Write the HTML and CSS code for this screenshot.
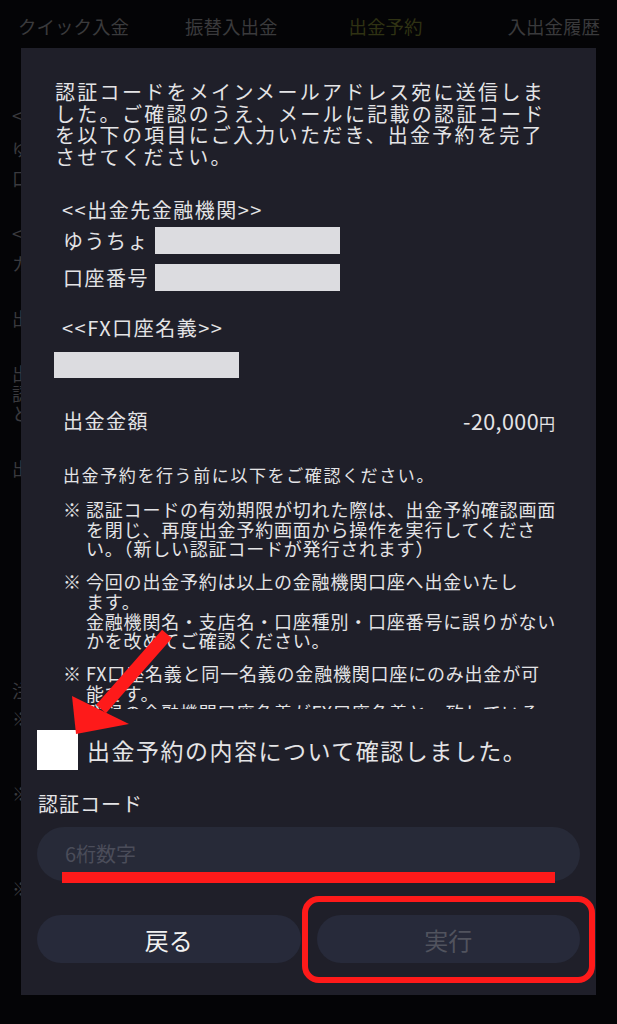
FILE: index.html
```html
<!DOCTYPE html>
<html lang="ja">
<head>
    <meta charset="UTF-8">
    <meta name="viewport" content="width=device-width, initial-scale=1.0">
    <title>出金予約</title>
    <link rel="stylesheet" href="styles.css">
</head>
<body>

<div class="tabs">
    <div class="tab">クイック入金</div>
    <div class="tab">振替入出金</div>
    <div class="tab active">出金予約</div>
    <div class="tab">入出金履歴</div>
</div>

<div class="page">
    <div class="bg-line gap-a">&lt;</div>
    <div class="bg-line gap-b">ゆ</div>
    <div class="bg-line gap-c">口</div>
    <div class="bg-line gap-d">&lt;</div>
    <div class="bg-line gap-c">カ</div>
    <div class="bg-line gap-e">出</div>
    <div class="bg-line gap-d">出</div>
    <div class="bg-line tight">認</div>
    <div class="bg-line tight">と</div>
    <div class="bg-line gap-e">出</div>
    <div class="bg-line gap-f">注</div>
    <div class="bg-line gap-g">※</div>
    <div class="bg-line gap-h">※</div>
    <div class="bg-line gap-i">※</div>
</div>

<div class="modal">
    <div class="scroll">
        <p class="lead">認証コードをメインメールアドレス宛に送信しま<br>した。ご確認のうえ、メールに記載の認証コード<br>を以下の項目にご入力いただき、出金予約を完了<br>させてください。</p>

        <div class="heading bank-heading">&lt;&lt;出金先金融機関&gt;&gt;</div>
        <div class="field first">
            <span class="field-label">ゆうちょ</span>
            <span class="mask"></span>
        </div>
        <div class="field">
            <span class="field-label">口座番号</span>
            <span class="mask"></span>
        </div>

        <div class="heading fx-heading">&lt;&lt;FX口座名義&gt;&gt;</div>
        <div class="mask name-mask"></div>

        <div class="amount">
            <span>出金金額</span>
            <span class="amount-value">-20,000<small>円</small></span>
        </div>

        <p class="intro">出金予約を行う前に以下をご確認ください。</p>

        <div class="note">
            <span class="mark">※</span>
            <span>認証コードの有効期限が切れた際は、出金予約確認画面<br>を閉じ、再度出金予約画面から操作を実行してくださ<br>い。（新しい認証コードが発行されます）</span>
        </div>
        <div class="note">
            <span class="mark">※</span>
            <span>今回の出金予約は以上の金融機関口座へ出金いたし<br>ます。<br>金融機関名・支店名・口座種別・口座番号に誤りがない<br>かを改めてご確認ください。</span>
        </div>
        <div class="note">
            <span class="mark">※</span>
            <span>FX口座名義と同一名義の金融機関口座にのみ出金が可<br>能です。<br>登録の金融機関口座名義がFX口座名義と一致している</span>
        </div>
    </div>

    <label class="confirm">
        <span class="checkbox"></span>
        出金予約の内容について確認しました。
    </label>

    <div class="code-label">認証コード</div>
    <div class="code-input">6桁数字</div>

    <div class="actions">
        <button class="btn">戻る</button>
        <button class="btn disabled">実行</button>
    </div>
</div>

<svg class="marks" width="617" height="1024" viewBox="0 0 617 1024">
    <rect x="62" y="872" width="493" height="11" fill="#fe1a1a"/>
    <rect x="305" y="899" width="287" height="81" rx="14" fill="none" stroke="#fe1a1a" stroke-width="6"/>
    <line x1="167" y1="634" x2="101" y2="709" stroke="#fe1a1a" stroke-width="13"/>
    <polygon points="72,696 129,724 76,734" fill="#fe1a1a"/>
</svg>

</body>
</html>
```

FILE: styles.css
```css
body {
    margin: 0;
    width: 617px;
    height: 1024px;
    overflow: hidden;
    background-color: #040406;
    font-family: "Noto Sans CJK JP", "Noto Sans", sans-serif;
    position: relative;
}
.tabs {
    display: grid;
    grid-template-columns: 1fr 1fr 1fr 1fr;
    justify-items: center;
    height: 52px;
    line-height: 52px;
    font-size: 18.5px;
    color: #3a3a3c;
}
.tab:first-child {
    justify-self: start;
    padding-left: 18px;
}
.tab:last-child {
    justify-self: end;
    padding-right: 17px;
}
.tab.active {
    color: #2f3213;
}
.page {
    padding-left: 12px;
    color: #3a3a3e;
    font-size: 18px;
    line-height: 20px;
}
.gap-a { margin-top: 53px; }
.gap-b { margin-top: 13px; }
.gap-c { margin-top: 10px; }
.gap-d { margin-top: 35px; }
.gap-e { margin-top: 35px; }
.gap-f { margin-top: 202px; }
.gap-g { margin-top: 8px; }
.gap-h { margin-top: 55px; }
.gap-i { margin-top: 75px; }

.modal {
    position: absolute;
    left: 21px;
    top: 48px;
    width: 575px;
    height: 947px;
    box-sizing: border-box;
    padding: 0 16px;
    background-color: #1f1f29;
    color: #e4e4e6;
}
.scroll {
    height: 661px;
    overflow: hidden;
    padding: 33px 25px 0 18px;
    box-sizing: border-box;
}
.lead {
    margin: 0;
    font-size: 20px;
    letter-spacing: 2.3px;
    line-height: 21.5px;
    white-space: nowrap;
}
.heading {
    margin-left: 7px;
    font-size: 20px;
    letter-spacing: 1.5px;
    line-height: 24px;
}
.bank-heading { margin-top: 31px; }
.fx-heading { margin-top: 25px; }
.field {
    display: flex;
    align-items: center;
    height: 27px;
    margin-top: 10px;
    margin-left: 8px;
}
.field.first { margin-top: 5px; }
.field-label {
    width: 92px;
    font-size: 20px;
    letter-spacing: 1.5px;
}
.mask {
    display: block;
    width: 185px;
    height: 27px;
    background-color: #dcdce0;
}
.name-mask {
    margin-top: 12px;
    margin-left: -1px;
    height: 26px;
}
.amount {
    display: flex;
    justify-content: space-between;
    align-items: center;
    margin-top: 30px;
    margin-left: 8px;
    height: 24px;
    font-size: 20px;
    letter-spacing: 1.5px;
}
.amount-value {
    letter-spacing: 0.4px;
    font-size: 21.5px;
}
.amount-value small {
    font-size: 16px;
    letter-spacing: 0;
}
.intro {
    margin: 33px 0 0 8px;
    font-size: 17px;
    letter-spacing: 1.6px;
    line-height: 20px;
}
.note {
    display: flex;
    margin-top: 15px;
    margin-left: 8px;
    font-size: 18px;
    letter-spacing: 0.8px;
    line-height: 19.7px;
    white-space: nowrap;
}
.note + .note { margin-top: 13px; }
.mark {
    width: 23px;
    flex-shrink: 0;
    letter-spacing: 0;
}
.confirm {
    display: flex;
    align-items: center;
    gap: 9px;
    margin-top: 21px;
    height: 40px;
    font-size: 23px;
    letter-spacing: 1.5px;
}
.checkbox {
    width: 41px;
    height: 40px;
    background-color: #fff;
}
.code-label {
    margin: 22px 0 0 1px;
    font-size: 20px;
    line-height: 24px;
    letter-spacing: 1px;
}
.code-input {
    margin-top: 11px;
    height: 54px;
    line-height: 54px;
    border-radius: 27px;
    padding-left: 28px;
    background-color: #272a38;
    color: #4b4d5a;
    font-size: 20px;
}
.actions {
    display: flex;
    gap: 16px;
    margin-top: 34px;
}
.btn {
    flex: 1;
    height: 48px;
    border: none;
    border-radius: 24px;
    background-color: #272a3a;
    color: #f2f2f2;
    font-family: inherit;
    font-size: 24px;
    padding: 0;
}
.btn.disabled {
    color: #51535e;
}
.marks {
    position: absolute;
    left: 0;
    top: 0;
    pointer-events: none;
}
```
